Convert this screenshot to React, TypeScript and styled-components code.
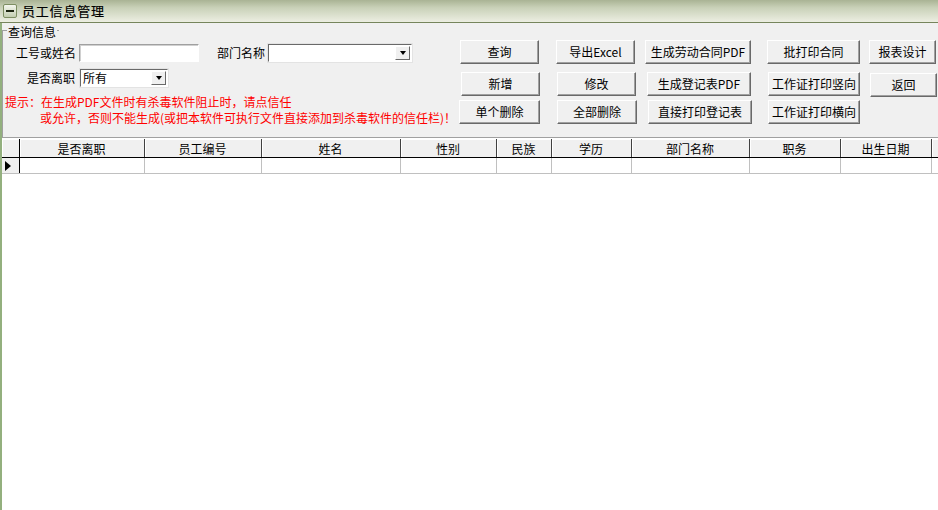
import React from "react";
import styled, { createGlobalStyle } from "styled-components";

const Global = createGlobalStyle`
  html, body { margin: 0; padding: 0; background: #f0f0f0; }
  body {
    font-family: "Noto Sans CJK SC", "Liberation Sans", sans-serif;
    font-size: 12px;
    color: #000;
  }
  * { box-sizing: border-box; }
`;

const Window = styled.div`
  width: 938px;
  height: 510px;
  display: flex;
  flex-direction: column;
  background: #f0f0f0;
  overflow: hidden;
`;

const TitleBar = styled.div`
  height: 23px;
  flex: none;
  display: flex;
  align-items: center;
  gap: 5px;
  padding-left: 3px;
  background: linear-gradient(#a9b394 0%, #c9d1b8 35%, #eceee2 100%);
  border-bottom: 1px solid #76855c;
`;

const TitleIcon = styled.div`
  width: 14px;
  height: 14px;
  border: 1px solid #7d8e62;
  border-radius: 2px;
  background: linear-gradient(#f4f6ee, #c3ceb0);
  display: flex;
  align-items: center;
  justify-content: center;
  &::after {
    content: "";
    width: 8px;
    height: 2px;
    background: #1c2410;
  }
`;

const TitleText = styled.span`
  font-size: 13px;
  line-height: 16px;
  color: #000;
  letter-spacing: 0.8px;
  -webkit-text-stroke: 0.2px #000;
`;

const Body = styled.div`
  flex: 1;
  display: flex;
  flex-direction: column;
  border-left: 2px solid #93b07e;
  min-height: 0;
`;

const Group = styled.div`
  height: 115px;
  flex: none;
  position: relative;
  border-bottom: 1px solid #a0a0a0;
  display: flex;
  flex-direction: column;
`;

const LegendRow = styled.div`
  display: flex;
  align-items: center;
  height: 14px;
  margin-top: 1px;
`;

const LegendLine = styled.span<{ $w: number }>`
  width: ${(p) => p.$w}px;
  height: 1px;
  background: #a0a0a0;
  align-self: flex-start;
  margin-top: 6px;
`;

const LegendText = styled.span`
  line-height: 13px;
  padding: 0 0 0 1px;
  margin-right: 1px;
`;

const GroupContent = styled.div`
  flex: 1;
  display: flex;
  border-left: 1px solid #a0a0a0;
  margin-top: -7px;
  padding-top: 9px;
`;

const FormArea = styled.div`
  width: 456px;
  flex: none;
  display: flex;
  flex-direction: column;
`;

const FormRow = styled.div<{ $top: number }>`
  display: flex;
  align-items: center;
  margin-top: ${(p) => p.$top}px;
  height: 18px;
`;

const Label = styled.span<{ $w: number; $pr?: number }>`
  width: ${(p) => p.$w}px;
  text-align: right;
  padding-right: ${(p) => p.$pr ?? 3}px;
  line-height: 14px;
  flex: none;
`;

const TextInput = styled.div<{ $w: number }>`
  width: ${(p) => p.$w}px;
  height: 18px;
  background: #fff;
  border: 1px solid;
  border-color: #a0a0a0 #fff #fff #a0a0a0;
  box-shadow: inset 1px 1px #d0d0d0;
`;

const Select = styled.div<{ $w: number }>`
  width: ${(p) => p.$w}px;
  height: 18px;
  background: #fff;
  border: 1px solid;
  border-color: #696969 #fff #fff #696969;
  outline: 1px solid #e3e3e3;
  display: flex;
  align-items: center;
  justify-content: space-between;
  padding: 1px 1px 1px 2px;
  line-height: 14px;
`;

const DropBtn = styled.div`
  width: 15px;
  height: 14px;
  background: #f0f0f0;
  border: 1px solid;
  border-color: #fff #696969 #696969 #fff;
  display: flex;
  align-items: center;
  justify-content: center;
  &::after {
    content: "";
    border-left: 3.5px solid transparent;
    border-right: 3.5px solid transparent;
    border-top: 4px solid #000;
  }
`;

const Hint = styled.div<{ $indent: number; $top?: number }>`
  color: #ff0000;
  line-height: 16px;
  padding-left: ${(p) => p.$indent}px;
  margin-top: ${(p) => p.$top ?? 0}px;
  white-space: nowrap;
`;

const ButtonGrid = styled.div`
  display: grid;
  grid-template-columns: 97px 89px 122px 102px 67px;
  grid-template-rows: 32px 28px 24px;
  align-items: start;
`;

const Btn = styled.button<{ $w: number; $dx?: number; $dy?: number }>`
  width: ${(p) => p.$w}px;
  height: 24px;
  margin-left: ${(p) => p.$dx ?? 0}px;
  margin-top: ${(p) => p.$dy ?? 0}px;
  padding: 0;
  background: #f0f0f0;
  border: 1px solid;
  border-color: #fff #696969 #696969 #fff;
  box-shadow: inset -1px -1px #a0a0a0;
  font-family: "Noto Sans CJK SC", "Liberation Sans", sans-serif;
  font-size: 12px;
  line-height: 14px;
  color: #000;
  white-space: nowrap;
`;

const GridArea = styled.div`
  flex: 1;
  background: #fff;
  border-top: 1px solid #fff;
  overflow: hidden;
`;

const Table = styled.table`
  border-collapse: collapse;
  table-layout: fixed;
  width: 938px;
`;

const HeadCell = styled.th<{ $ind?: boolean }>`
  height: 18px;
  padding: 0;
  background: #f0f0f0;
  font-weight: normal;
  font-size: 12px;
  line-height: 14px;
  text-align: center;
  border-top: 1px solid #fff;
  border-bottom: 1px solid #000;
  border-right: 1px solid ${(p) => (p.$ind ? "#000" : "#404040")};
  box-shadow: inset 1px 0 #fff;
  white-space: nowrap;
  overflow: hidden;
`;

const DataCell = styled.td<{ $ind?: boolean }>`
  height: 16px;
  padding: 0;
  background: ${(p) => (p.$ind ? "#f0f0f0" : "#fff")};
  border-right: 1px solid ${(p) => (p.$ind ? "#000" : "#c0c0c0")};
  border-bottom: 1px solid #c0c0c0;
`;

const RowPointer = styled.span`
  display: block;
  margin-left: 3px;
  width: 0;
  height: 0;
  border-top: 5px solid transparent;
  border-bottom: 5px solid transparent;
  border-left: 6px solid #000;
`;

const columns: { title: string; w: number }[] = [
  { title: "是否离职", w: 125 },
  { title: "员工编号", w: 117 },
  { title: "姓名", w: 139 },
  { title: "性别", w: 96 },
  { title: "民族", w: 55 },
  { title: "学历", w: 80 },
  { title: "部门名称", w: 118 },
  { title: "职务", w: 91 },
  { title: "出生日期", w: 91 },
  { title: "", w: 60 },
];

export default function App() {
  return (
    <>
      <Global />
      <Window>
        <TitleBar>
          <TitleIcon />
          <TitleText>员工信息管理</TitleText>
        </TitleBar>
        <Body>
          <Group>
            <LegendRow>
              <LegendLine $w={5} />
              <LegendText>查询信息</LegendText>
              <LegendLine $w={2} />
            </LegendRow>
            <GroupContent>
              <FormArea>
                <FormRow $top={4}>
                  <Label $w={76}>工号或姓名</Label>
                  <TextInput $w={120} />
                  <Label $w={69}>部门名称</Label>
                  <Select $w={144}>
                    <span />
                    <DropBtn />
                  </Select>
                </FormRow>
                <FormRow $top={7}>
                  <Label $w={77} $pr={5}>是否离职</Label>
                  <Select $w={88}>
                    <span>所有</span>
                    <DropBtn />
                  </Select>
                </FormRow>
                <Hint $indent={2} $top={7}>
                  提示：在生成PDF文件时有杀毒软件阻止时，请点信任
                </Hint>
                <Hint $indent={37}>
                  或允许，否则不能生成(或把本软件可执行文件直接添加到杀毒软件的信任栏)！
                </Hint>
              </FormArea>
              <ButtonGrid>
                <Btn $w={79} $dx={1}>查询</Btn>
                <Btn $w={79}>导出Excel</Btn>
                <Btn $w={106}>生成劳动合同PDF</Btn>
                <Btn $w={93}>批打印合同</Btn>
                <Btn $w={67}>报表设计</Btn>
                <Btn $w={79} $dx={2}>新增</Btn>
                <Btn $w={79} $dx={1}>修改</Btn>
                <Btn $w={104} $dx={2}>生成登记表PDF</Btn>
                <Btn $w={92} $dx={1}>工作证打印竖向</Btn>
                <Btn $w={67} $dx={1} $dy={1}>返回</Btn>
                <Btn $w={81}>单个删除</Btn>
                <Btn $w={80} $dx={1}>全部删除</Btn>
                <Btn $w={104} $dx={3}>直接打印登记表</Btn>
                <Btn $w={92} $dx={1}>工作证打印横向</Btn>
              </ButtonGrid>
            </GroupContent>
          </Group>
          <GridArea>
            <Table>
              <colgroup>
                <col style={{ width: 17 }} />
                {columns.map((c, i) => (
                  <col key={i} style={{ width: c.w }} />
                ))}
              </colgroup>
              <thead>
                <tr>
                  <HeadCell $ind />
                  {columns.map((c, i) => (
                    <HeadCell key={i}>{c.title}</HeadCell>
                  ))}
                </tr>
              </thead>
              <tbody>
                <tr>
                  <DataCell $ind>
                    <RowPointer />
                  </DataCell>
                  {columns.map((_, i) => (
                    <DataCell key={i} />
                  ))}
                </tr>
              </tbody>
            </Table>
          </GridArea>
        </Body>
      </Window>
    </>
  );
}
